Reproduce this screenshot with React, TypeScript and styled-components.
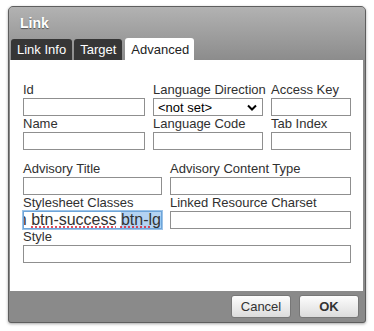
import styled, { createGlobalStyle } from "styled-components";

const GlobalStyle = createGlobalStyle`
  html, body {
    margin: 0;
    padding: 0;
    background: #fff;
    font-family: "Liberation Sans", Arial, sans-serif;
  }
`;

const Page = styled.div`
  width: 374px;
  height: 331px;
  padding: 6px 0 0 8px;
  box-sizing: border-box;
  overflow: hidden;
`;

const Dialog = styled.div`
  width: 358px;
  height: 317px;
  box-sizing: border-box;
  border: 1px solid #5e5e5e;
  border-radius: 5px 5px 3px 3px;
  background: #8a8a8a;
  display: flex;
  flex-direction: column;
  overflow: hidden;
  box-shadow: 0 1px 3px rgba(0, 0, 0, 0.35);
`;

const Header = styled.div`
  background: linear-gradient(#b2b2b2, #8c8c8c);
  display: flex;
  flex-direction: column;
  padding: 0 0 0 2px;
`;

const Title = styled.div`
  color: #fff;
  font-weight: bold;
  font-size: 14px;
  line-height: 16px;
  padding: 8px 0 7px 9px;
  text-shadow: 0 1px 1px rgba(0, 0, 0, 0.5);
`;

const TabRow = styled.div`
  display: flex;
  gap: 2px;
  align-items: flex-end;
  height: 22px;
`;

const Tab = styled.div<{ $active?: boolean }>`
  font-size: 13px;
  line-height: 20px;
  padding: 0 6px;
  height: ${(p) => (p.$active ? "22px" : "21px")};
  box-sizing: border-box;
  padding-top: ${(p) => (p.$active ? "2px" : "1px")};
  background: ${(p) => (p.$active ? "#fff" : "#363636")};
  color: ${(p) => (p.$active ? "#222" : "#fff")};
  border-radius: 3px 3px 0 0;
  width: ${(p) => (p.$active ? "69px" : "auto")};
  margin-left: ${(p) => (p.$active ? "1px" : "0")};
`;

const Body = styled.div`
  flex: 1;
  background: #fff;
  margin: 0 2px 0 1px;
  padding: 22px 11px 0 13px;
  display: flex;
  flex-direction: column;
`;

const Row = styled.div<{ $cols: string; $gap?: number }>`
  display: grid;
  grid-template-columns: ${(p) => p.$cols};
  column-gap: 8px;
  margin-top: ${(p) => p.$gap ?? 0}px;
`;

const Field = styled.div`
  display: flex;
  flex-direction: column;
`;

const Label = styled.div`
  font-size: 13px;
  line-height: 16px;
  color: #303030;
  white-space: nowrap;
`;

const Input = styled.div<{ $focus?: boolean }>`
  height: 18px;
  box-sizing: border-box;
  border: 1px solid ${(p) => (p.$focus ? "#6ea5d9" : "#8f8f8f")};
  box-shadow: ${(p) => (p.$focus ? "0 0 0 1px #9cc3e8" : "none")};
  background: #fff;
  overflow: hidden;
  display: flex;
  align-items: center;
  justify-content: flex-end;
  font-size: 16px;
  color: #333;
  white-space: nowrap;
`;

const Select = styled.div`
  height: 18px;
  box-sizing: border-box;
  border: 1px solid #8f8f8f;
  display: flex;
  align-items: center;
  justify-content: space-between;
  padding: 0 5px 0 4px;
  font-size: 13px;
  color: #000;
`;

const Spell = styled.span`
  text-decoration: underline dotted #d23;
  text-underline-offset: 2px;
`;

const Selected = styled(Spell)`
  background: #b4d3f2;
`;

const Footer = styled.div`
  height: 31px;
  display: flex;
  justify-content: flex-end;
  align-items: flex-start;
  gap: 8px;
  padding: 4px 6px 0 0;
  box-sizing: border-box;
`;

const Button = styled.div<{ $primary?: boolean }>`
  width: 60px;
  height: 23px;
  box-sizing: border-box;
  border-radius: 3px;
  background: linear-gradient(#fdfdfd, #dcdcdc);
  border: 1px solid #777;
  display: flex;
  align-items: center;
  justify-content: center;
  font-size: 13px;
  font-weight: ${(p) => (p.$primary ? "bold" : "normal")};
  color: #333;
`;

function Chevron() {
  return (
    <svg width="10" height="7" viewBox="0 0 10 7">
      <path d="M1 1.5 L5 5.5 L9 1.5" fill="none" stroke="#000" strokeWidth="2" />
    </svg>
  );
}

export default function App() {
  return (
    <Page>
      <GlobalStyle />
      <Dialog>
        <Header>
          <Title>Link</Title>
          <TabRow>
            <Tab>Link Info</Tab>
            <Tab>Target</Tab>
            <Tab $active>Advanced</Tab>
          </TabRow>
        </Header>
        <Body>
          <Row $cols="122px 110px 80px">
            <Field>
              <Label>Id</Label>
              <Input />
            </Field>
            <Field>
              <Label>Language Direction</Label>
              <Select>
                <span>&lt;not set&gt;</span>
                <Chevron />
              </Select>
            </Field>
            <Field>
              <Label>Access Key</Label>
              <Input />
            </Field>
          </Row>
          <Row $cols="122px 110px 80px">
            <Field>
              <Label>Name</Label>
              <Input />
            </Field>
            <Field>
              <Label>Language Code</Label>
              <Input />
            </Field>
            <Field>
              <Label>Tab Index</Label>
              <Input />
            </Field>
          </Row>
          <Row $cols="139px 181px" $gap={11}>
            <Field>
              <Label>Advisory Title</Label>
              <Input />
            </Field>
            <Field>
              <Label>Advisory Content Type</Label>
              <Input />
            </Field>
          </Row>
          <Row $cols="139px 181px">
            <Field>
              <Label>Stylesheet Classes</Label>
              <Input $focus>
                <span>
                  n <Spell>btn-success</Spell> <Selected>btn-lg</Selected>
                </span>
              </Input>
            </Field>
            <Field>
              <Label>Linked Resource Charset</Label>
              <Input />
            </Field>
          </Row>
          <Row $cols="328px">
            <Field>
              <Label>Style</Label>
              <Input />
            </Field>
          </Row>
        </Body>
        <Footer>
          <Button>Cancel</Button>
          <Button $primary>OK</Button>
        </Footer>
      </Dialog>
    </Page>
  );
}
